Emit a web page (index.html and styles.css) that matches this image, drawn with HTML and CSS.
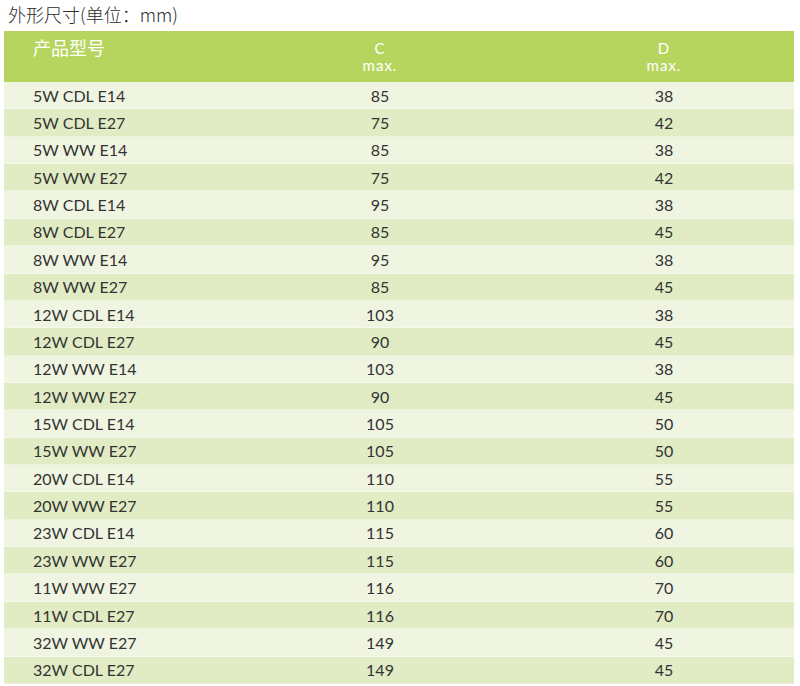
FILE: index.html
```html
<!DOCTYPE html>
<html lang="zh">
<head>
<meta charset="utf-8">
<title>外形尺寸</title>
<link rel="stylesheet" href="styles.css">
</head>
<body>
<div class="title">外形尺寸(单位：mm)</div>
<div class="spec">
  <div class="head">
    <div class="name">产品型号</div>
    <div class="dim">C<span class="max">max.</span></div>
    <div class="dim">D<span class="max">max.</span></div>
  </div>
  <div class="row"><span>5W CDL E14</span><span>85</span><span>38</span></div>
  <div class="row"><span>5W CDL E27</span><span>75</span><span>42</span></div>
  <div class="row"><span>5W WW E14</span><span>85</span><span>38</span></div>
  <div class="row"><span>5W WW E27</span><span>75</span><span>42</span></div>
  <div class="row"><span>8W CDL E14</span><span>95</span><span>38</span></div>
  <div class="row"><span>8W CDL E27</span><span>85</span><span>45</span></div>
  <div class="row"><span>8W WW E14</span><span>95</span><span>38</span></div>
  <div class="row"><span>8W WW E27</span><span>85</span><span>45</span></div>
  <div class="row"><span>12W CDL E14</span><span>103</span><span>38</span></div>
  <div class="row"><span>12W CDL E27</span><span>90</span><span>45</span></div>
  <div class="row"><span>12W WW E14</span><span>103</span><span>38</span></div>
  <div class="row"><span>12W WW E27</span><span>90</span><span>45</span></div>
  <div class="row"><span>15W CDL E14</span><span>105</span><span>50</span></div>
  <div class="row"><span>15W WW E27</span><span>105</span><span>50</span></div>
  <div class="row"><span>20W CDL E14</span><span>110</span><span>55</span></div>
  <div class="row"><span>20W WW E27</span><span>110</span><span>55</span></div>
  <div class="row"><span>23W CDL E14</span><span>115</span><span>60</span></div>
  <div class="row"><span>23W WW E27</span><span>115</span><span>60</span></div>
  <div class="row"><span>11W WW E27</span><span>116</span><span>70</span></div>
  <div class="row"><span>11W CDL E27</span><span>116</span><span>70</span></div>
  <div class="row"><span>32W WW E27</span><span>149</span><span>45</span></div>
  <div class="row"><span>32W CDL E27</span><span>149</span><span>45</span></div>
</div>
</body>
</html>
```
FILE: styles.css
```css
html, body {
  margin: 0;
  padding: 0;
  background: #ffffff;
}
body {
  font-family: Lato, "Noto Sans CJK SC", sans-serif;
  color: #333333;
}
.title {
  height: 31px;
  box-sizing: border-box;
  padding: 2px 0 0 8px;
  font-size: 18px;
  line-height: 24px;
  color: #2b2b2b;
  font-family: "Noto Sans CJK SC", Lato, sans-serif;
  font-weight: 300;
}
.spec {
  margin-left: 4px;
  width: 790px;
  display: grid;
  grid-template-rows: 51px repeat(22, 27.37px);
}
.head, .row {
  display: grid;
  grid-template-columns: 222px 308px 260px;
}
.head {
  background: #b6d55f;
  color: #ffffff;
}
.head .name {
  padding: 4px 0 0 29px;
  font-family: "Noto Sans CJK SC", sans-serif;
  font-size: 18px;
  line-height: 24px;
}
.head .dim {
  display: flex;
  flex-direction: column;
  align-items: center;
  padding-top: 9px;
  font-size: 15px;
  line-height: 17px;
  letter-spacing: 1px;
}
.row {
  font-size: 16px;
  align-items: center;
  box-shadow: inset 0 -1px 0 rgba(255, 255, 255, 0.35);
}
.row span {
  text-align: center;
  line-height: 20px;
}
.row span:first-child {
  text-align: left;
  padding-left: 29px;
}
.row:nth-child(even) { background: #f0f5e2; }
.row:nth-child(odd) { background: #e1ecc5; }
```
